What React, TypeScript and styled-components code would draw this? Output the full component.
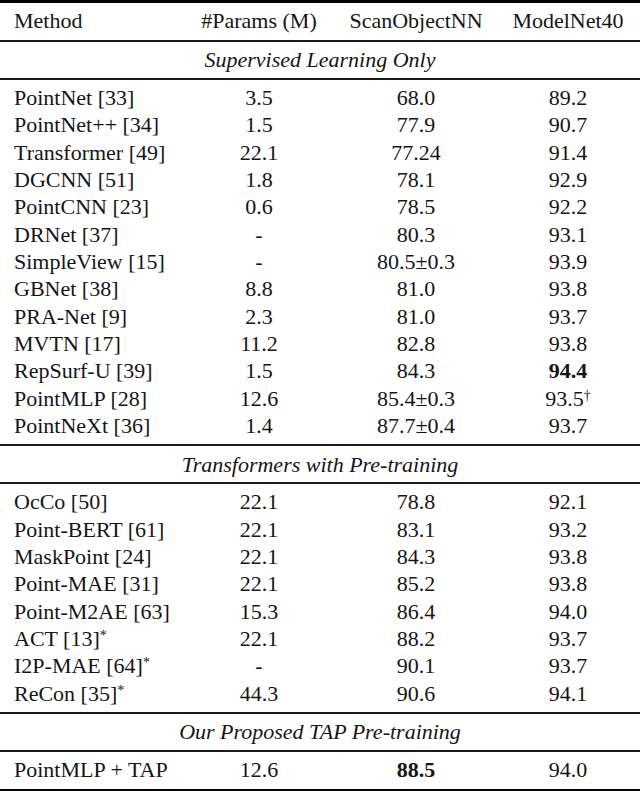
import styled, { createGlobalStyle } from 'styled-components';

const GlobalStyle = createGlobalStyle`
  html, body {
    margin: 0;
    padding: 0;
    background: #fff;
  }
  body {
    font-family: "Liberation Serif", "Times New Roman", serif;
    color: #151515;
  }
`;

const Table = styled.div`
  width: 640px;
  display: flex;
  flex-direction: column;
  font-size: 22px;
`;

const Rule = styled.div<{ $thick?: boolean }>`
  height: ${p => (p.$thick ? 3 : 2)}px;
  background: ${p => (p.$thick ? '#000' : '#1c1c1c')};
`;

const Group = styled.div<{ $top: number; $bottom: number }>`
  padding: ${p => p.$top}px 0 ${p => p.$bottom}px;
`;

const Row = styled.div`
  display: grid;
  grid-template-columns: 190px 138px 176px 128px 1fr;
  height: 27.35px;
  line-height: 27.35px;
  white-space: nowrap;
`;

const Cell = styled.div<{ $left?: boolean; $bold?: boolean }>`
  text-align: ${p => (p.$left ? 'left' : 'center')};
  padding-left: ${p => (p.$left ? '14px' : '0')};
  font-weight: ${p => (p.$bold ? 700 : 400)};
`;

const SectionTitle = styled.div`
  text-align: center;
  font-style: italic;
  line-height: 27.4px;
  padding: 4.3px 0;
`;

const Sup = styled.sup`
  font-size: 14px;
  line-height: 0;
  vertical-align: 6px;
`;

type Entry = {
  method: string;
  mark?: string;
  params: string;
  scan: string;
  model: string;
  modelMark?: string;
  bold?: 'scan' | 'model';
};

const supervised: Entry[] = [
  { method: 'PointNet [33]', params: '3.5', scan: '68.0', model: '89.2' },
  { method: 'PointNet++ [34]', params: '1.5', scan: '77.9', model: '90.7' },
  { method: 'Transformer [49]', params: '22.1', scan: '77.24', model: '91.4' },
  { method: 'DGCNN [51]', params: '1.8', scan: '78.1', model: '92.9' },
  { method: 'PointCNN [23]', params: '0.6', scan: '78.5', model: '92.2' },
  { method: 'DRNet [37]', params: '-', scan: '80.3', model: '93.1' },
  { method: 'SimpleView [15]', params: '-', scan: '80.5±0.3', model: '93.9' },
  { method: 'GBNet [38]', params: '8.8', scan: '81.0', model: '93.8' },
  { method: 'PRA-Net [9]', params: '2.3', scan: '81.0', model: '93.7' },
  { method: 'MVTN [17]', params: '11.2', scan: '82.8', model: '93.8' },
  { method: 'RepSurf-U [39]', params: '1.5', scan: '84.3', model: '94.4', bold: 'model' },
  { method: 'PointMLP [28]', params: '12.6', scan: '85.4±0.3', model: '93.5', modelMark: '†' },
  { method: 'PointNeXt [36]', params: '1.4', scan: '87.7±0.4', model: '93.7' },
];

const pretrained: Entry[] = [
  { method: 'OcCo [50]', params: '22.1', scan: '78.8', model: '92.1' },
  { method: 'Point-BERT [61]', params: '22.1', scan: '83.1', model: '93.2' },
  { method: 'MaskPoint [24]', params: '22.1', scan: '84.3', model: '93.8' },
  { method: 'Point-MAE [31]', params: '22.1', scan: '85.2', model: '93.8' },
  { method: 'Point-M2AE [63]', params: '15.3', scan: '86.4', model: '94.0' },
  { method: 'ACT [13]', mark: '*', params: '22.1', scan: '88.2', model: '93.7' },
  { method: 'I2P-MAE [64]', mark: '*', params: '-', scan: '90.1', model: '93.7' },
  { method: 'ReCon [35]', mark: '*', params: '44.3', scan: '90.6', model: '94.1' },
];

const ours: Entry[] = [
  { method: 'PointMLP + TAP', params: '12.6', scan: '88.5', model: '94.0', bold: 'scan' },
];

function EntryRow({ e }: { e: Entry }) {
  return (
    <Row>
      <Cell $left>
        {e.method}
        {e.mark && <Sup>{e.mark}</Sup>}
      </Cell>
      <Cell>{e.params}</Cell>
      <Cell $bold={e.bold === 'scan'}>{e.scan}</Cell>
      <Cell $bold={e.bold === 'model'}>
        {e.model}
        {e.modelMark && <Sup>{e.modelMark}</Sup>}
      </Cell>
    </Row>
  );
}

function Block({ title, rows }: { title: string; rows: Entry[] }) {
  return (
    <>
      <SectionTitle>{title}</SectionTitle>
      <Rule />
      <Group $top={4} $bottom={5}>
        {rows.map(r => (
          <EntryRow key={r.method} e={r} />
        ))}
      </Group>
    </>
  );
}

export default function App() {
  return (
    <>
      <GlobalStyle />
      <Table>
        <Rule $thick />
        <Group $top={3.5} $bottom={6.1}>
          <Row>
            <Cell $left>Method</Cell>
            <Cell>#Params (M)</Cell>
            <Cell>ScanObjectNN</Cell>
            <Cell>ModelNet40</Cell>
          </Row>
        </Group>
        <Rule />
        <Block title="Supervised Learning Only" rows={supervised} />
        <Rule />
        <Block title="Transformers with Pre-training" rows={pretrained} />
        <Rule />
        <Block title="Our Proposed TAP Pre-training" rows={ours} />
        <Rule $thick />
      </Table>
    </>
  );
}
